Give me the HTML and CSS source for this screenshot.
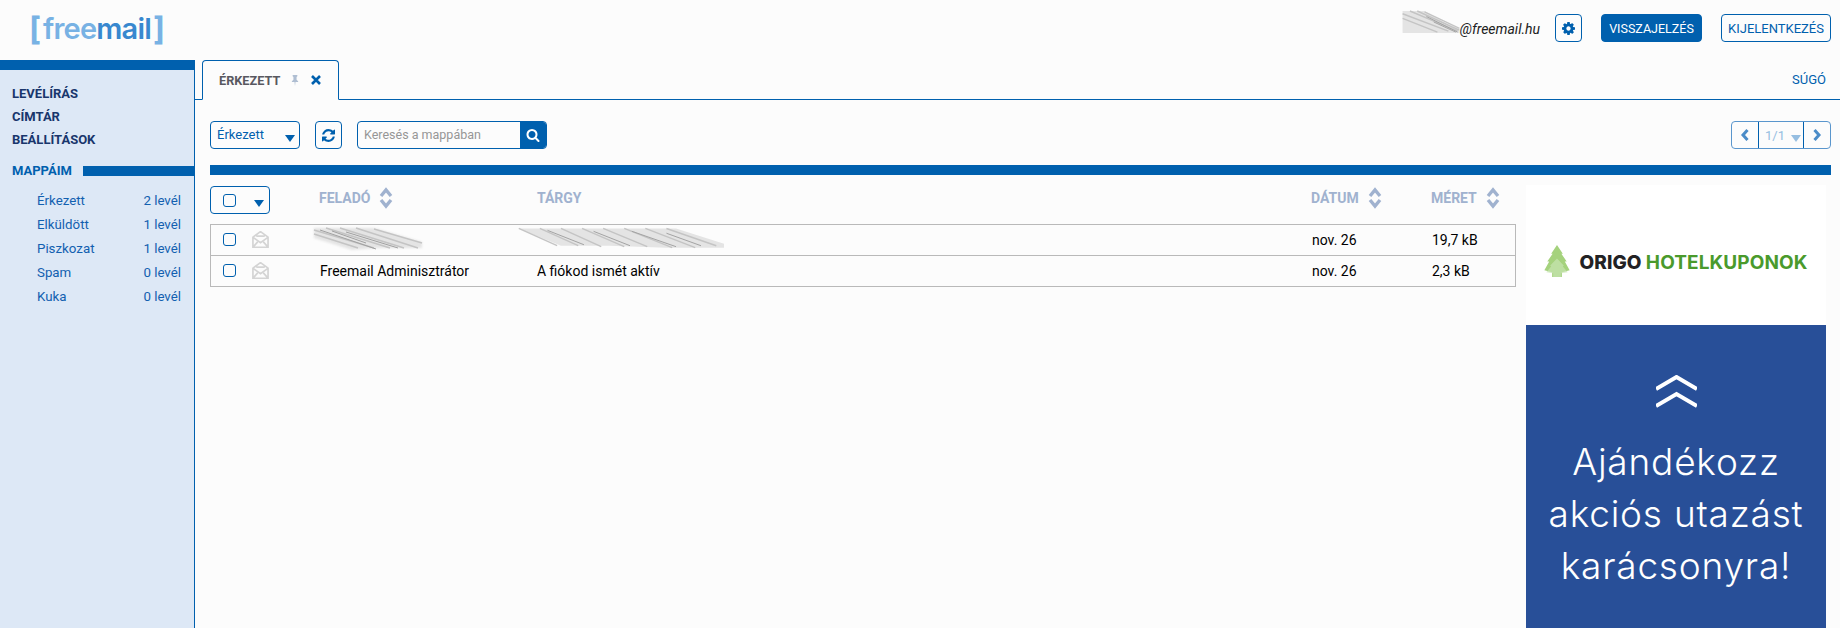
FILE: index.html
```html
<!DOCTYPE html>
<html lang="hu">

<head>
  <meta charset="UTF-8">
  <meta name="viewport" content="width=device-width, initial-scale=1.0">
  <title>Freemail</title>
  <link rel="stylesheet" href="styles.css">
</head>

<body>
  <header class="topbar">
    <div class="logo"><span class="logo-bracket">[</span><span class="logo-light">free</span><span class="logo-dark">mail</span><span class="logo-bracket">]</span></div>
    <div class="account">
      <div class="user">
        <svg class="smear smear-user" viewBox="0 0 62 24">
          <path class="smear-base" d="M0 0H24L62 22V24H30L0 24z" />
          <path class="smear-lines" d="M0 3 L50 22 M0 8 L38 23 M8 0 L60 22 M16 0 L62 21 M24 1 L62 19" />
          <path class="smear-dark" d="M26 6 L60 23 M34 12 L58 23" />
        </svg>
        <span class="user-mail">@freemail.hu</span>
      </div>
      <button class="btn btn-icon">
        <svg class="icon-gear" viewBox="0 0 1536 1536"><path d="M1024 768q0-106-75-181t-181-75-181 75-75 181 75 181 181 75 181-75 75-181zm512-109v222q0 12-8 23t-20 13l-185 28q-19 54-39 91 35 50 107 138 10 12 10 25t-9 23q-27 37-99 108t-94 71q-12 0-26-9l-138-108q-44 23-91 38-16 136-29 186-7 28-36 28h-222q-14 0-24.500-8.500t-11.500-21.500l-28-184q-49-16-90-37l-141 107q-10 9-25 9-14 0-25-11-126-114-165-168-7-10-7-23 0-12 8-23 15-21 51-66.500t54-70.500q-27-50-41-99l-183-27q-13-2-21-12.500t-8-23.500v-222q0-12 8-23t19-13l186-28q14-46 39-92-40-57-107-138-10-12-10-24 0-10 9-23 26-36 98.500-107.500t94.500-71.500q13 0 26 10l138 107q44-23 91-38 16-136 29-186 7-28 36-28h222q14 0 24.500 8.500t11.500 21.500l28 184q49 16 90 37l142-107q9-9 24-9 13 0 25 10 129 119 165 170 7 8 7 22 0 12-8 23-15 21-51 66.500t-54 70.500q26 50 41 98l183 28q13 2 21 12.500t8 23.500z"/></svg>
      </button>
      <button class="btn btn-solid">VISSZAJELZÉS</button>
      <button class="btn btn-text">KIJELENTKEZÉS</button>
    </div>
  </header>

  <div class="layout">
    <nav class="sidebar">
      <ul class="side-menu">
        <li>LEVÉLÍRÁS</li>
        <li>CÍMTÁR</li>
        <li>BEÁLLÍTÁSOK</li>
      </ul>
      <div class="folders-title"><span>MAPPÁIM</span><i></i></div>
      <ul class="folders">
        <li><span>Érkezett</span><span>2 levél</span></li>
        <li><span>Elküldött</span><span>1 levél</span></li>
        <li><span>Piszkozat</span><span>1 levél</span></li>
        <li><span>Spam</span><span>0 levél</span></li>
        <li><span>Kuka</span><span>0 levél</span></li>
      </ul>
    </nav>

    <main class="content">
      <div class="tabs">
        <div class="tab">
          <span class="tab-title">ÉRKEZETT</span>
          <svg class="icon-pin" viewBox="0 0 10 14"><path d="M2 0h6v1.500L7 2.500V6l2 2v1H5.600L5 14 4.400 9H1V8l2-2V2.500L2 1.500z"/></svg>
          <svg class="icon-close" viewBox="0 0 12 12"><path d="M2 2l8 8M10 2l-8 8"/></svg>
        </div>
        <a class="help">SÚGÓ</a>
      </div>

      <div class="toolbar">
        <div class="btn-select"><span>Érkezett</span><i class="caret"></i></div>
        <button class="btn btn-icon btn-refresh">
          <svg class="icon-refresh" viewBox="0 0 1536 1536"><path d="M1511 928q0 5-1 7-64 268-268 434.500t-478 166.500q-146 0-282.500-55t-243.500-157l-129 129q-19 19-45 19t-45-19-19-45v-448q0-26 19-45t45-19h448q26 0 45 19t19 45-19 45l-137 137q71 66 161 102t187 36q134 0 250-65t186-179q11-17 53-117 8-23 30-23h192q13 0 22.500 9.500t9.500 22.500zm25-800v448q0 26-19 45t-45 19h-448q-26 0-45-19t-19-45 19-45l138-138q-148-137-349-137-134 0-250 65t-186 179q-11 17-53 117-8 23-30 23h-199q-13 0-22.500-9.500t-9.500-22.500v-7q65-268 270-434.500t480-166.500q146 0 284 55.500t245 156.500l130-129q19-19 45-19t45 19 19 45z"/></svg>
        </button>
        <div class="search">
          <span class="search-input">Keresés a mappában</span>
          <span class="search-btn">
            <svg viewBox="0 0 1792 1792"><path d="M1216 832q0-185-131.500-316.500t-316.500-131.500-316.500 131.500-131.500 316.500 131.500 316.500 316.500 131.500 316.500-131.500 131.500-316.500zm512 832q0 52-38 90t-90 38q-54 0-90-38l-343-342q-179 124-399 124-143 0-273.500-55.500t-225-150-150-225-55.500-273.500 55.500-273.500 150-225 225-150 273.500-55.500 273.500 55.500 225 150 150 225 55.500 273.500q0 220-124 399l343 343q37 37 37 90z"/></svg>
          </span>
        </div>
        <div class="pager">
          <span class="pager-arrow"><svg viewBox="0 0 10 14"><path d="M7.500 2L3 7l4.500 5"/></svg></span>
          <span class="pager-num">1/1<i class="caret caret-light"></i></span>
          <span class="pager-arrow"><svg viewBox="0 0 10 14"><path d="M2.500 2L7 7l-4.500 5"/></svg></span>
        </div>
      </div>

      <div class="divider"></div>

      <div class="mail-area">
        <div class="mail-list">
          <div class="list-head">
            <div class="head-check"><span class="check"></span><i class="caret"></i></div>
            <div class="head-col">FELADÓ <svg class="sort" viewBox="0 0 14 22"><path d="M2 9l5-6 5 6M2 13l5 6 5-6"/></svg></div>
            <div class="head-col">TÁRGY</div>
            <div class="head-col">DÁTUM <svg class="sort" viewBox="0 0 14 22"><path d="M2 9l5-6 5 6M2 13l5 6 5-6"/></svg></div>
            <div class="head-col">MÉRET <svg class="sort" viewBox="0 0 14 22"><path d="M2 9l5-6 5 6M2 13l5 6 5-6"/></svg></div>
          </div>
          <div class="rows">
            <div class="row">
              <div class="row-icons">
                <span class="check"></span>
                <svg class="icon-mail" viewBox="0 0 18 18"><path d="M1 6.500L9 .7l8 5.800V17.200H1zM1.500 7L9 12.500 16.500 7M1.500 16.500L6 11.500M16.500 16.500L12 11.500M4.500 5.500h9"/></svg>
              </div>
              <div class="cell cell-smear">
                <svg class="smear smear-from" viewBox="0 0 108 22">
                  <path class="smear-base" d="M0 0H60L108 14V20H62L38 22 0 10z" />
                  <path class="smear-lines" d="M0 2 L60 20 M0 6 L44 20 M12 0 L76 20 M26 0 L90 20 M42 0 L104 20 M60 1 L108 15" />
                  <path class="smear-dark" d="M6 2 L62 21 M32 4 L84 20 M18 3 L52 15" />
                </svg>
              </div>
              <div class="cell cell-smear">
                <svg class="smear smear-subject" viewBox="0 0 220 22">
                  <path class="smear-base" d="M6 0H170L220 16V20H160L100 18 50 18z" />
                  <path class="smear-lines" d="M6 0 L46 18 M28 0 L68 18 M50 0 L92 19 M72 0 L116 19 M94 0 L140 19 M116 0 L166 20 M138 0 L190 20 M160 0 L212 18" />
                  <path class="smear-dark" d="M36 2 L74 17 M84 3 L122 18 M124 3 L170 19 M160 5 L196 18" />
                </svg>
              </div>
              <div class="cell">nov. 26</div>
              <div class="cell">19,7 kB</div>
            </div>
            <div class="row">
              <div class="row-icons">
                <span class="check"></span>
                <svg class="icon-mail" viewBox="0 0 18 18"><path d="M1 6.500L9 .7l8 5.800V17.200H1zM1.500 7L9 12.500 16.500 7M1.500 16.500L6 11.500M16.500 16.500L12 11.500M4.500 5.500h9"/></svg>
              </div>
              <div class="cell">Freemail Adminisztrátor</div>
              <div class="cell cell-subject">A fiókod ismét aktív</div>
              <div class="cell">nov. 26</div>
              <div class="cell">2,3 kB</div>
            </div>
          </div>
        </div>

        <aside class="ad">
          <div class="ad-logo">
            <svg class="ad-tree" viewBox="0 0 26 36">
              <path class="tree-a" d="M13 0l6 9h-1.500l5.500 8h-2l5 9-8 2v5h-10v-5l-8-2 5-9H3l5.500-8H7z"/>
              <path class="tree-b" d="M13 14l7 7-1 1 5 6-7 1v4h-8v-4l-7-1 5-6-1-1z"/>
            </svg>
            <span class="ad-brand">ORIGO <b>HOTELKUPONOK</b></span>
          </div>
          <div class="ad-body">
            <svg class="ad-chevrons" viewBox="0 0 41 33"><path d="M0 14L20.500 2 41 14M0 31L20.500 19 41 31"/></svg>
            <p>Ajándékozz<br>akciós utazást<br>karácsonyra!</p>
          </div>
        </aside>
      </div>
    </main>
  </div>
</body>

</html>
```

FILE: styles.css
```css
*,
*::before,
*::after {
  box-sizing: border-box;
}

:root {
  --blue: rgb(0, 96, 174);
  --side-bg: rgb(221, 232, 246);
  --head-color: rgb(160, 178, 207);
}

html,
body {
  height: 100%;
  margin: 0;
  overflow: hidden;
}

body {
  background-color: rgb(252, 252, 252);
  color: #000;
  font-family: Roboto, "Liberation Sans", sans-serif;
  font-size: 13px;
  display: flex;
  flex-direction: column;
}

ul {
  list-style: none;
  margin: 0;
  padding: 0;
}

button {
  font-family: inherit;
  cursor: pointer;
}

/* top bar */
.topbar {
  height: 60px;
  flex: none;
  display: flex;
  justify-content: space-between;
  padding: 14px 9px 0 29px;
}

.logo {
  display: flex;
  align-items: center;
  height: 30px;
  font-family: Inter, sans-serif;
  font-size: 29px;
  font-weight: 600;
  letter-spacing: -0.8px;
  line-height: 30px;
}

.logo-bracket {
  color: rgb(120, 178, 228);
  font-size: 32px;
  font-weight: 700;
  letter-spacing: 0;
}

.logo-light {
  margin-left: 2px;
  color: rgb(120, 178, 228);
}

.logo-dark {
  margin-right: 2px;
  color: rgb(56, 136, 207);
}

.account {
  display: flex;
  align-items: flex-start;
}

.user {
  display: flex;
  align-items: flex-start;
  height: 28px;
  margin-right: 15px;
}

.user-mail {
  font-style: italic;
  font-size: 14px;
  line-height: 14px;
  margin-top: 8px;
  color: #222;
}

/* blurred-out address and subject */
.smear {
  display: block;
  overflow: visible;
}

.smear-base {
  fill: rgb(228, 228, 228);
  filter: blur(0.8px);
}

.smear-lines,
.smear-dark {
  fill: none;
  filter: blur(0.5px);
}

.smear-lines {
  stroke: rgb(196, 196, 196);
  stroke-width: 1.500;
}

.smear-dark {
  stroke: rgb(160, 160, 160);
  stroke-width: 1;
}

.smear-user {
  width: 62px;
  height: 22px;
  margin-top: -3px;
  margin-right: -2px;
}

.btn {
  height: 28px;
  border: 1px solid var(--blue);
  border-radius: 4px;
  background: none;
  color: var(--blue);
  font-size: 12.500px;
  padding: 0;
  display: flex;
  align-items: center;
  justify-content: center;
}

.btn-icon {
  width: 27px;
}

.btn-icon svg {
  width: 13px;
  height: 13px;
  fill: var(--blue);
}

.btn-solid {
  width: 101px;
  margin-left: 19px;
  background-color: var(--blue);
  color: #fff;
}

.btn-text {
  width: 110px;
  margin-left: 19px;
  font-size: 13px;
}

/* page body */
.layout {
  flex: 1;
  display: flex;
  min-height: 0;
}

.sidebar {
  width: 195px;
  flex: none;
  background-color: var(--side-bg);
  border-top: 10px solid var(--blue);
  border-right: 1px solid var(--blue);
  padding-top: 12px;
}

.side-menu {
  padding-left: 12px;
  color: rgb(24, 54, 108);
  font-weight: 700;
  font-size: 13px;
  line-height: 23px;
}

.folders-title {
  display: flex;
  align-items: center;
  margin-top: 8px;
  padding-left: 12px;
  color: var(--blue);
  font-weight: 700;
  line-height: 24px;
}

.folders-title i {
  flex: 1;
  height: 10px;
  margin-left: 11px;
  background-color: var(--blue);
}

.folders {
  margin-top: 6px;
  padding: 0 13px 0 37px;
  color: rgb(18, 96, 176);
  font-size: 13.300px;
  line-height: 24px;
}

.folders li {
  display: flex;
  justify-content: space-between;
}

.content {
  flex: 1;
  min-width: 0;
  display: flex;
  flex-direction: column;
}

.tabs {
  height: 40px;
  flex: none;
  display: flex;
  justify-content: space-between;
  align-items: flex-end;
  padding: 0 14px 0 7px;
  border-bottom: 1px solid var(--blue);
}

.tab {
  width: 137px;
  height: 40px;
  margin-bottom: -1px;
  display: flex;
  align-items: center;
  padding-left: 16px;
  border: 1px solid var(--blue);
  border-bottom: 1px solid rgb(252, 252, 252);
  border-radius: 4px 4px 0 0;
}

.tab-title {
  color: rgb(88, 88, 96);
  font-weight: 700;
  font-size: 12.700px;
}

.icon-pin {
  width: 8px;
  height: 11px;
  margin-left: 11px;
  fill: rgb(175, 190, 210);
}

.icon-close {
  width: 12px;
  height: 12px;
  margin-left: 11px;
  fill: none;
  stroke: var(--blue);
  stroke-width: 2.600;
}

.help {
  color: var(--blue);
  font-size: 13px;
  line-height: 14px;
  margin-bottom: 12px;
}

.toolbar {
  flex: none;
  display: flex;
  align-items: flex-start;
  padding: 21px 9px 0 15px;
  height: 65px;
}

.btn-select {
  width: 90px;
  height: 28px;
  border: 1px solid var(--blue);
  border-radius: 4px;
  color: var(--blue);
  font-size: 13px;
  padding: 0 0 0 6px;
  display: flex;
  justify-content: space-between;
  align-items: center;
}

.btn-select span {
  margin-top: -1px;
}

.caret {
  display: block;
  width: 0;
  height: 0;
  margin: 7px 4px 0 0;
  border-left: 5px solid transparent;
  border-right: 5px solid transparent;
  border-top: 7px solid var(--blue);
}

.btn-refresh {
  margin-left: 15px;
}

.btn-refresh svg {
  width: 13px;
  height: 13px;
}

.search {
  width: 190px;
  height: 28px;
  margin-left: 15px;
  border: 1px solid var(--blue);
  border-radius: 4px;
  display: flex;
  overflow: hidden;
}

.search-input {
  flex: 1;
  padding-left: 6px;
  color: rgb(150, 150, 150);
  font-size: 12.500px;
  line-height: 26px;
}

.search-btn {
  width: 26px;
  background-color: var(--blue);
  display: flex;
  align-items: center;
  justify-content: center;
}

.search-btn svg {
  width: 14px;
  height: 14px;
  fill: #fff;
}

.pager {
  width: 100px;
  height: 28px;
  margin-left: auto;
  display: flex;
  border: 1px solid rgb(90, 150, 205);
  border-radius: 4px;
}

.pager-arrow {
  width: 26px;
  display: flex;
  align-items: center;
  justify-content: center;
}

.pager-arrow svg {
  width: 10px;
  height: 14px;
  fill: none;
  stroke: rgb(75, 140, 200);
  stroke-width: 3;
}

.pager-num {
  flex: 1;
  display: flex;
  align-items: center;
  padding-left: 6px;
  border-left: 1px solid var(--blue);
  border-right: 1px solid var(--blue);
  color: rgb(150, 190, 225);
  font-size: 13px;
}

.caret-light {
  margin: 6px 0 0 6px;
  border-top-color: rgb(150, 190, 225);
}

.divider {
  flex: none;
  height: 10px;
  margin: 0 9px 0 15px;
  background-color: var(--blue);
}

.mail-area {
  flex: 1;
  min-height: 0;
  display: flex;
  align-items: flex-start;
  padding: 11px 14px 0 15px;
  gap: 10px;
}

.mail-list {
  flex: 1;
  min-width: 0;
}

.list-head,
.row {
  display: grid;
  grid-template-columns: 109px 218px 1fr 120px 85px;
  align-items: center;
}

.list-head {
  height: 38px;
  align-items: start;
}

.head-check {
  width: 60px;
  height: 28px;
  border: 1px solid var(--blue);
  border-radius: 4px;
  display: flex;
  align-items: center;
  justify-content: space-between;
  padding-left: 12px;
}

.head-check .caret {
  margin-right: 5px;
}

.head-col {
  display: flex;
  align-items: center;
  height: 24px;
  color: var(--head-color);
  font-weight: 700;
  font-size: 14px;
}

.sort {
  width: 14px;
  height: 22px;
  margin-left: 9px;
  fill: none;
  stroke: var(--head-color);
  stroke-width: 3.400;
}

.check {
  display: block;
  flex: none;
  width: 13px;
  height: 13px;
  border: 1.5px solid var(--blue);
  border-radius: 3px;
  background-color: rgb(252, 252, 252);
}

.rows {
  border: 1px solid rgb(185, 185, 185);
}

.row {
  height: 30px;
  margin-left: -1px;
  margin-right: -1px;
}

.row+.row {
  height: 31px;
  border-top: 1px solid rgb(185, 185, 185);
}

.row-icons {
  display: flex;
  align-items: center;
  margin-top: -1px;
  padding-left: 13px;
  gap: 16px;
}

.icon-mail {
  width: 17px;
  height: 17px;
  fill: none;
  stroke: rgb(212, 212, 212);
  stroke-width: 1.800;
}

.cell {
  padding-left: 1px;
  font-size: 14px;
  color: #000;
}

.cell-subject {
  padding-left: 0;
}

.cell-smear {
  align-self: start;
}

.smear-from {
  width: 108px;
  height: 22px;
  margin-left: -6px;
  margin-top: 3px;
}

.smear-subject {
  width: 211px;
  height: 22px;
  margin-left: -25px;
  margin-top: 3px;
}

/* banner on the right */
.ad {
  width: 300px;
  flex: none;
  margin-top: -1px;
}

.ad-logo {
  height: 140px;
  background-color: #fff;
  display: flex;
  align-items: center;
  justify-content: center;
  gap: 9px;
  padding-top: 14px;
}

.ad-tree {
  width: 26px;
  height: 35px;
  filter: blur(0.4px);
}

.tree-a {
  fill: rgb(165, 210, 125);
}

.tree-b {
  fill: rgb(200, 228, 178);
  opacity: 0.7;
}

.ad-brand {
  font-family: Inter, sans-serif;
  font-weight: 800;
  font-size: 19px;
  letter-spacing: 0.1px;
  color: rgb(34, 34, 36);
  white-space: nowrap;
}

.ad-brand b {
  font-weight: 700;
  color: rgb(74, 154, 44);
}

.ad-body {
  height: 320px;
  background-color: rgb(40, 79, 152);
  color: #fff;
  text-align: center;
  padding-top: 50px;
}

.ad-chevrons {
  display: block;
  width: 41px;
  height: 33px;
  margin: 0 auto;
  fill: none;
  stroke: #fff;
  stroke-width: 4;
}

.ad-body p {
  margin: 28px 0 0;
  font-family: Inter, sans-serif;
  font-weight: 350;
  font-size: 37px;
  letter-spacing: 0.8px;
  line-height: 52px;
}
```
